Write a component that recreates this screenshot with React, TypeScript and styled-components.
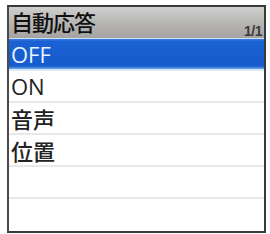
import React from "react";
import styled, { createGlobalStyle } from "styled-components";

const GlobalStyle = createGlobalStyle`
  html, body {
    margin: 0;
    padding: 0;
    background: #ffffff;
  }
`;

const Screen = styled.div`
  box-sizing: border-box;
  margin: 5px 0 0 7px;
  width: 259px;
  height: 228px;
  border: 2px solid #3a3a3a;
  border-left-color: #4a4a4a;
  display: flex;
  flex-direction: column;
  overflow: hidden;
  font-family: "Open Sans", "Noto Sans CJK JP", sans-serif;
`;

const Header = styled.div`
  height: 31px;
  flex: none;
  display: flex;
  align-items: flex-start;
  justify-content: space-between;
  padding: 0 2px 0 2px;
  background: linear-gradient(#cfcfcf 0%, #b9b8b6 45%, #a5a3a2 100%);
  border-bottom: 1px solid #cfe0f4;
`;

const Title = styled.div`
  font-family: "Noto Sans CJK JP", sans-serif;
  font-size: 22px;
  font-weight: 500;
  line-height: 28px;
  color: #111;
  letter-spacing: -1px;
`;

const Page = styled.div`
  align-self: flex-end;
  font-family: "Liberation Sans", sans-serif;
  font-size: 14px;
  font-weight: bold;
  color: #3a3a3a;
  letter-spacing: -0.5px;
  margin-bottom: -1px;
`;

const List = styled.div`
  flex: 1;
  display: grid;
  grid-template-rows: repeat(6, 1fr);
`;

const Row = styled.div<{ $selected?: boolean }>`
  display: flex;
  align-items: center;
  padding-left: 2px;
  font-size: 22px;
  color: ${(p) => (p.$selected ? "#e8f4ff" : "#222")};
  background: ${(p) =>
    p.$selected
      ? "linear-gradient(#3d7fe0 0%, #1a62d4 8%, #175bcc 90%, #6fa6ea 100%)"
      : "#fff"};
  border-bottom: 2px solid ${(p) => (p.$selected ? "#dbe9f8" : "#e8e8e8")};
  &:last-child {
    border-bottom: none;
  }
`;

const Label = styled.span<{ $cjk?: boolean }>`
  font-family: ${(p) =>
    p.$cjk ? `"Noto Sans CJK JP", sans-serif` : `"Open Sans", sans-serif`};
  font-weight: 500;
  line-height: 1;
`;

const items = [
  { label: "OFF", cjk: false },
  { label: "ON", cjk: false },
  { label: "音声", cjk: true },
  { label: "位置", cjk: true },
  { label: "", cjk: false },
  { label: "", cjk: false },
];

export default function App() {
  return (
    <>
      <GlobalStyle />
      <Screen>
        <Header>
          <Title>自動応答</Title>
          <Page>1/1</Page>
        </Header>
        <List>
          {items.map((item, i) => (
            <Row key={i} $selected={i === 0}>
              <Label $cjk={item.cjk}>{item.label}</Label>
            </Row>
          ))}
        </List>
      </Screen>
    </>
  );
}
